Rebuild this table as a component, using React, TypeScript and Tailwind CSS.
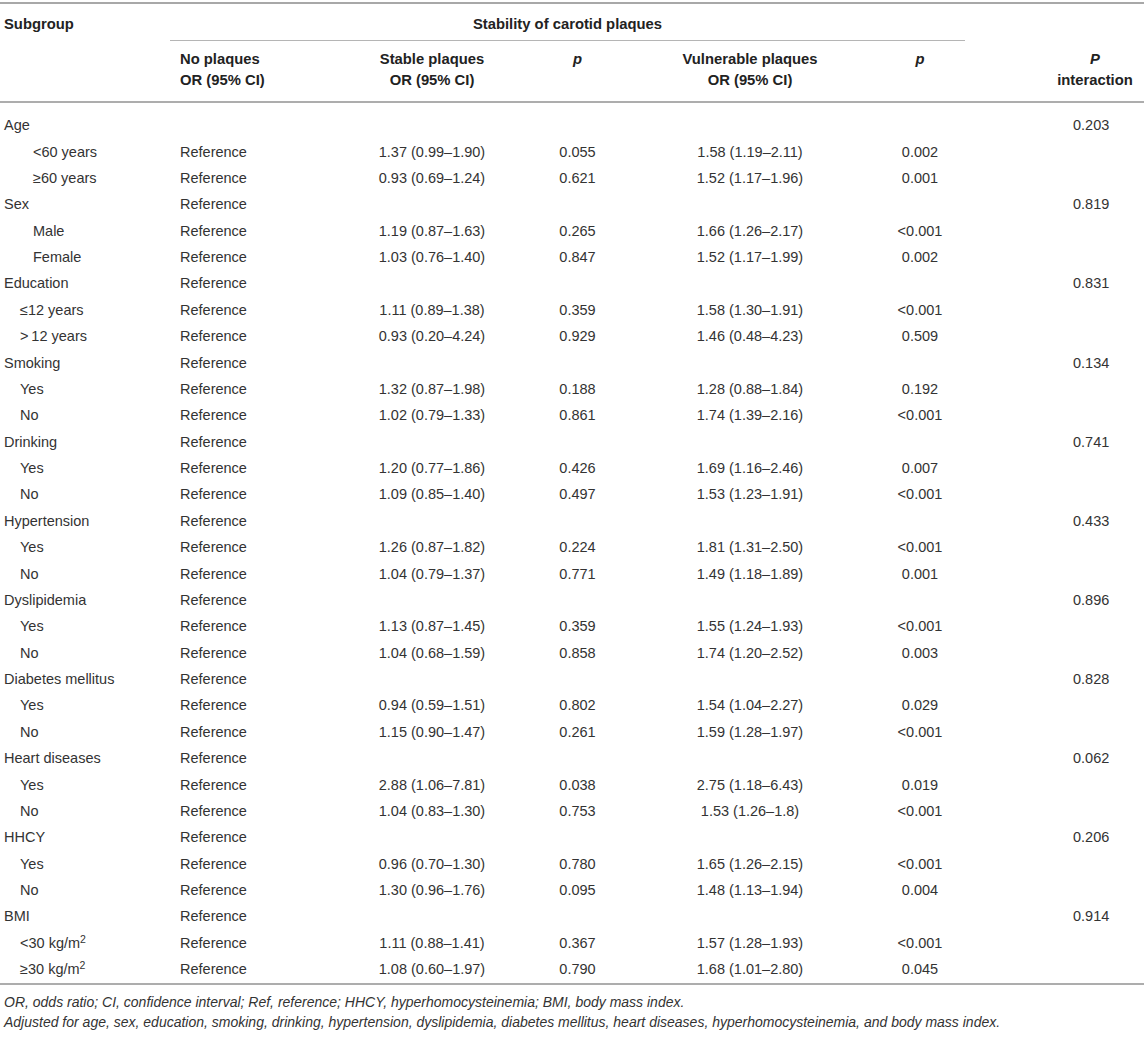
import React from "react";

type Row = {
  label: React.ReactNode;
  indent?: "deep" | "shallow";
  ref?: boolean;
  stable?: string;
  p1?: string;
  vuln?: string;
  p2?: string;
  inter?: string;
};

const kg = (sign: string) => (
  <>
    {sign}30 kg/m<span className="relative -top-[5px] text-[10.5px] leading-none">2</span>
  </>
);

const rows: Row[] = [
  { label: "Age", inter: "0.203" },
  { label: "<60 years", indent: "deep", ref: true, stable: "1.37 (0.99–1.90)", p1: "0.055", vuln: "1.58 (1.19–2.11)", p2: "0.002" },
  { label: "≥60 years", indent: "deep", ref: true, stable: "0.93 (0.69–1.24)", p1: "0.621", vuln: "1.52 (1.17–1.96)", p2: "0.001" },
  { label: "Sex", ref: true, inter: "0.819" },
  { label: "Male", indent: "deep", ref: true, stable: "1.19 (0.87–1.63)", p1: "0.265", vuln: "1.66 (1.26–2.17)", p2: "<0.001" },
  { label: "Female", indent: "deep", ref: true, stable: "1.03 (0.76–1.40)", p1: "0.847", vuln: "1.52 (1.17–1.99)", p2: "0.002" },
  { label: "Education", ref: true, inter: "0.831" },
  { label: "≤12 years", indent: "shallow", ref: true, stable: "1.11 (0.89–1.38)", p1: "0.359", vuln: "1.58 (1.30–1.91)", p2: "<0.001" },
  { label: ">\u200912 years", indent: "shallow", ref: true, stable: "0.93 (0.20–4.24)", p1: "0.929", vuln: "1.46 (0.48–4.23)", p2: "0.509" },
  { label: "Smoking", ref: true, inter: "0.134" },
  { label: "Yes", indent: "shallow", ref: true, stable: "1.32 (0.87–1.98)", p1: "0.188", vuln: "1.28 (0.88–1.84)", p2: "0.192" },
  { label: "No", indent: "shallow", ref: true, stable: "1.02 (0.79–1.33)", p1: "0.861", vuln: "1.74 (1.39–2.16)", p2: "<0.001" },
  { label: "Drinking", ref: true, inter: "0.741" },
  { label: "Yes", indent: "shallow", ref: true, stable: "1.20 (0.77–1.86)", p1: "0.426", vuln: "1.69 (1.16–2.46)", p2: "0.007" },
  { label: "No", indent: "shallow", ref: true, stable: "1.09 (0.85–1.40)", p1: "0.497", vuln: "1.53 (1.23–1.91)", p2: "<0.001" },
  { label: "Hypertension", ref: true, inter: "0.433" },
  { label: "Yes", indent: "shallow", ref: true, stable: "1.26 (0.87–1.82)", p1: "0.224", vuln: "1.81 (1.31–2.50)", p2: "<0.001" },
  { label: "No", indent: "shallow", ref: true, stable: "1.04 (0.79–1.37)", p1: "0.771", vuln: "1.49 (1.18–1.89)", p2: "0.001" },
  { label: "Dyslipidemia", ref: true, inter: "0.896" },
  { label: "Yes", indent: "shallow", ref: true, stable: "1.13 (0.87–1.45)", p1: "0.359", vuln: "1.55 (1.24–1.93)", p2: "<0.001" },
  { label: "No", indent: "shallow", ref: true, stable: "1.04 (0.68–1.59)", p1: "0.858", vuln: "1.74 (1.20–2.52)", p2: "0.003" },
  { label: "Diabetes mellitus", ref: true, inter: "0.828" },
  { label: "Yes", indent: "shallow", ref: true, stable: "0.94 (0.59–1.51)", p1: "0.802", vuln: "1.54 (1.04–2.27)", p2: "0.029" },
  { label: "No", indent: "shallow", ref: true, stable: "1.15 (0.90–1.47)", p1: "0.261", vuln: "1.59 (1.28–1.97)", p2: "<0.001" },
  { label: "Heart diseases", ref: true, inter: "0.062" },
  { label: "Yes", indent: "shallow", ref: true, stable: "2.88 (1.06–7.81)", p1: "0.038", vuln: "2.75 (1.18–6.43)", p2: "0.019" },
  { label: "No", indent: "shallow", ref: true, stable: "1.04 (0.83–1.30)", p1: "0.753", vuln: "1.53 (1.26–1.8)", p2: "<0.001" },
  { label: "HHCY", ref: true, inter: "0.206" },
  { label: "Yes", indent: "shallow", ref: true, stable: "0.96 (0.70–1.30)", p1: "0.780", vuln: "1.65 (1.26–2.15)", p2: "<0.001" },
  { label: "No", indent: "shallow", ref: true, stable: "1.30 (0.96–1.76)", p1: "0.095", vuln: "1.48 (1.13–1.94)", p2: "0.004" },
  { label: "BMI", ref: true, inter: "0.914" },
  { label: kg("<"), indent: "shallow", ref: true, stable: "1.11 (0.88–1.41)", p1: "0.367", vuln: "1.57 (1.28–1.93)", p2: "<0.001" },
  { label: kg("≥"), indent: "shallow", ref: true, stable: "1.08 (0.60–1.97)", p1: "0.790", vuln: "1.68 (1.01–2.80)", p2: "0.045" },
];

// column widths: subgroup | no plaques | stable | p | vulnerable | p | P interaction
const cols = "grid grid-cols-[170px_160px_204px_87px_258px_90px_175px]";

export default function App() {
  return (
    <div className="w-[1144px] h-[1038px] bg-white pt-[2px] font-['Liberation_Sans',Arial,sans-serif] text-[#333]">
      <div className="border-t-2 border-[#a8a8a8]">
        {/* Title row */}
        <div className={cols}>
          <div className="pl-[4px] pt-[11px] pb-[7px] text-[14.8px] leading-[18px] font-bold text-[#222]">
            Subgroup
          </div>
          <div className="col-span-5 mr-[4px] pt-[11px] pb-[7px] text-center text-[14.8px] leading-[18px] font-bold text-[#222] border-b border-[#b5b5b5]">
            Stability of carotid plaques
          </div>
          <div />
        </div>

        {/* Column headers */}
        <div className={`${cols} pt-[8px] pb-[10px] border-b-2 border-[#adadad] text-[14.8px] leading-[21px] font-bold text-[#222]`}>
          <div />
          <div className="pl-[10px]">
            No plaques
            <br />
            OR (95% CI)
          </div>
          <div className="text-center">
            Stable plaques
            <br />
            OR (95% CI)
          </div>
          <div className="text-center italic">p</div>
          <div className="text-center">
            Vulnerable plaques
            <br />
            OR (95% CI)
          </div>
          <div className="text-center italic pr-[8px]">p</div>
          <div className="pl-[77px] text-center">
            <span className="italic">P</span>
            <br />
            interaction
          </div>
        </div>

        {/* Body */}
        <div className="pt-[9px] pb-[1px] border-b-2 border-[#adadad] text-[14.5px]">
          {rows.map((r, i) => (
            <div key={i} className={`${cols} h-[26.375px] items-center leading-[18px]`}>
              <div
                className={
                  r.indent === "deep"
                    ? "pl-[33px]"
                    : r.indent === "shallow"
                    ? "pl-[20px]"
                    : "pl-[4px]"
                }
              >
                {r.label}
              </div>
              <div className="pl-[10px]">{r.ref ? "Reference" : ""}</div>
              <div className="text-center">{r.stable}</div>
              <div className="text-center">{r.p1}</div>
              <div className="text-center">{r.vuln}</div>
              <div className="text-center pr-[8px]">{r.p2}</div>
              <div className="pl-[104px]">{r.inter}</div>
            </div>
          ))}
        </div>

        {/* Footnotes */}
        <div className="pt-[7px] pl-[4px] italic text-[14px] leading-[20px] text-[#333]">
          <p>
            OR, odds ratio; CI, confidence interval; Ref, reference; HHCY, hyperhomocysteinemia; BMI, body mass index.
          </p>
          <p>
            Adjusted for age, sex, education, smoking, drinking, hypertension, dyslipidemia, diabetes mellitus, heart
            diseases, hyperhomocysteinemia, and body mass index.
          </p>
        </div>
      </div>
    </div>
  );
}
